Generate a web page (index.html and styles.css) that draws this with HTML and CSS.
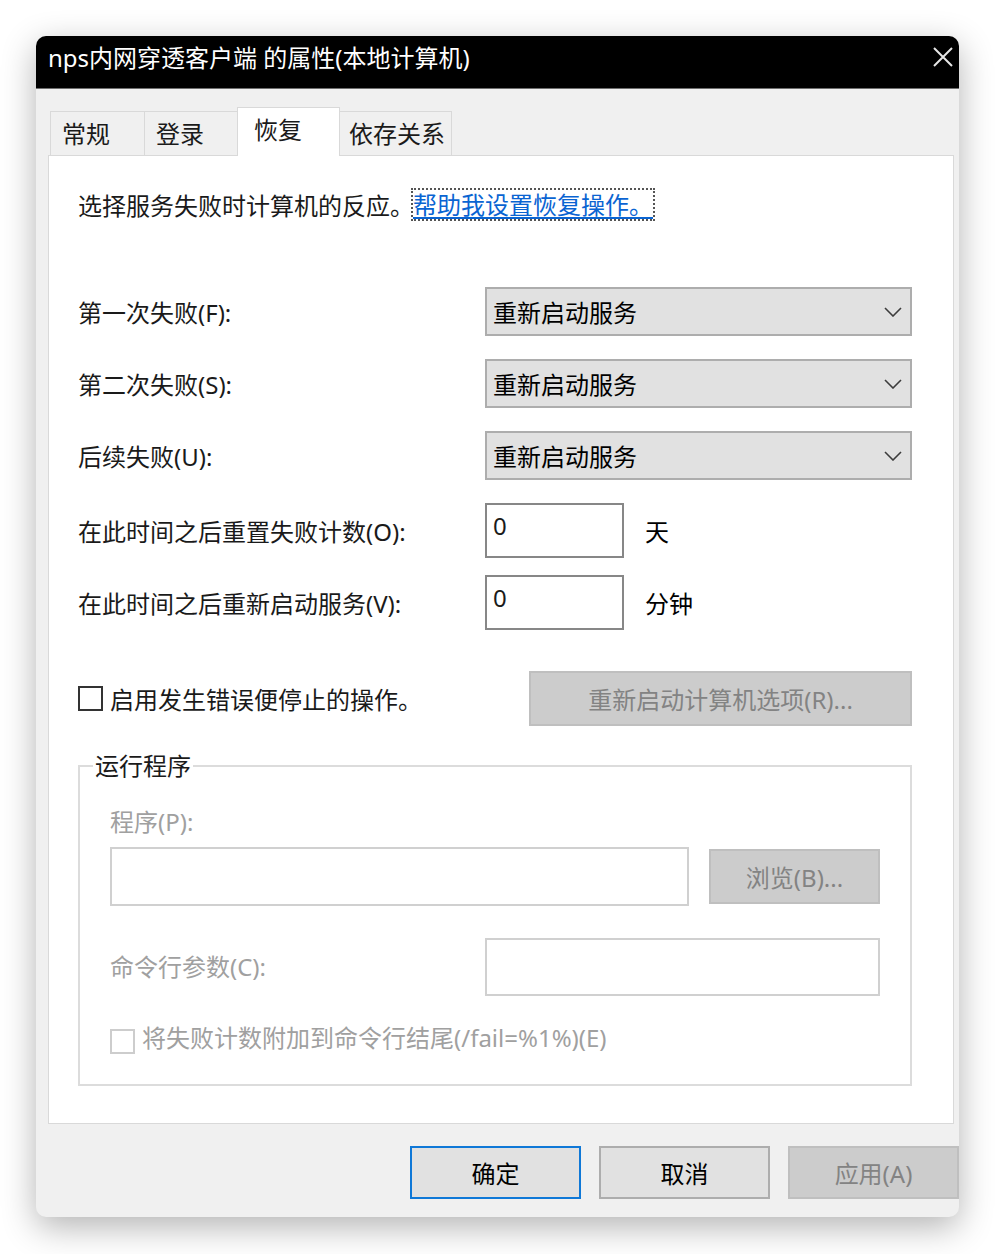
FILE: index.html
```html
<!DOCTYPE html>
<html lang="zh-CN">
<head>
    <meta charset="UTF-8">
    <title>nps内网穿透客户端 的属性(本地计算机)</title>
    <link rel="stylesheet" href="styles.css">
</head>
<body>
    <div class="window">
        <div class="titlebar">
            <span class="title">nps内网穿透客户端 的属性(本地计算机)</span>
            <svg class="close" width="22" height="22" viewBox="0 0 22 22"><path d="M2 2L20 20M20 2L2 20" stroke="#e6e6e6" stroke-width="2" fill="none"/></svg>
        </div>
        <div class="body">
            <div class="tabs">
                <div class="tab">常规</div>
                <div class="tab">登录</div>
                <div class="tab active">恢复</div>
                <div class="tab wide">依存关系</div>
            </div>
            <div class="panel">
                <div class="intro">选择服务失败时计算机的反应。<a class="link">帮助我设置恢复操作。</a></div>

                <div class="row">
                    <span class="label">第一次失败(F):</span>
                    <div class="select">重新启动服务<svg width="18" height="10" viewBox="0 0 18 10"><path d="M1 1L9 9L17 1" stroke="#3c3c3c" stroke-width="1.6" fill="none"/></svg></div>
                </div>
                <div class="row">
                    <span class="label">第二次失败(S):</span>
                    <div class="select">重新启动服务<svg width="18" height="10" viewBox="0 0 18 10"><path d="M1 1L9 9L17 1" stroke="#3c3c3c" stroke-width="1.6" fill="none"/></svg></div>
                </div>
                <div class="row">
                    <span class="label">后续失败(U):</span>
                    <div class="select">重新启动服务<svg width="18" height="10" viewBox="0 0 18 10"><path d="M1 1L9 9L17 1" stroke="#3c3c3c" stroke-width="1.6" fill="none"/></svg></div>
                </div>
                <div class="row num">
                    <span class="label">在此时间之后重置失败计数(O):</span>
                    <div class="input">0</div>
                    <span class="unit">天</span>
                </div>
                <div class="row num">
                    <span class="label">在此时间之后重新启动服务(V):</span>
                    <div class="input">0</div>
                    <span class="unit">分钟</span>
                </div>

                <div class="check-row">
                    <span class="check"><span class="box"></span>启用发生错误便停止的操作。</span>
                    <button class="btn off restart">重新启动计算机选项(R)...</button>
                </div>

                <fieldset class="group">
                    <legend>运行程序</legend>
                    <div class="muted">程序(P):</div>
                    <div class="prog-row">
                        <div class="field"></div>
                        <button class="btn off browse">浏览(B)...</button>
                    </div>
                    <div class="cmd-row">
                        <span class="muted cmd-label">命令行参数(C):</span>
                        <div class="field"></div>
                    </div>
                    <div class="check muted small"><span class="box dim"></span>将失败计数附加到命令行结尾(/fail=%1%)(E)</div>
                </fieldset>
            </div>
            <div class="footer">
                <button class="btn primary">确定</button>
                <button class="btn">取消</button>
                <button class="btn off">应用(A)</button>
            </div>
        </div>
    </div>
</body>
</html>
```

FILE: styles.css
```css
*{margin:0;padding:0;box-sizing:border-box}
body{background:#fff;font-family:"Noto Sans","Noto Sans CJK SC",sans-serif;font-size:24px;color:#000}
.window{width:923px;margin:36px 0 40px 36px;border-radius:10px;overflow:hidden;background:#f0f0f0;box-shadow:0 10px 34px rgba(0,0,0,0.3)}
.titlebar{height:53px;background:#000;border-bottom:1px solid #6e6e6e;display:flex;align-items:flex-start;justify-content:space-between;padding:0 5px 0 12px;color:#fff}
.title{line-height:44px;white-space:nowrap}
.close{margin-top:10px}
.body{padding-top:18px}
.tabs{display:flex;align-items:flex-end;margin-left:14px;height:48px}
.tab{width:95px;height:44px;padding:0 0 2px 11px;display:flex;align-items:center;background:#f0f0f0;border:1px solid #d9d9d9;border-bottom:none;margin-right:-1px;color:#1a1a1a}
.tab.active{width:103px;height:49px;padding:0 0 8px 16px;background:#fff;margin:0 -1px -1px -1px;position:relative;z-index:1}
.tab.wide{width:113px;padding-left:9px}
.panel{margin:0 5px 0 12px;background:#fff;border:1px solid #d9d9d9;padding:32px 41px 37px 29px}
.intro{display:flex;align-items:center;height:33px;color:#1a1a1a}
.link{display:inline-block;color:#0a64d2;text-decoration:underline;text-underline-offset:3px;border:2px dotted #555;line-height:29px;padding:0;margin-left:-3px}
.row{display:flex;align-items:center;height:49px;margin-top:23px}
.intro+.row{margin-top:66px}
.row.num{height:55px}
.row.num+.row.num{margin-top:17px}
.label{width:407px;flex:none;color:#1a1a1a}
.select{flex:1;height:49px;display:flex;align-items:center;justify-content:space-between;padding:0 8px 0 6px;background:#e1e1e1;border:2px solid #adadad}
.input{width:139px;height:55px;border:2px solid #878787;padding:4px 0 0 6px;line-height:34px;color:#1a1a1a}
.unit{margin-left:21px}
.check-row{display:flex;align-items:center;justify-content:space-between;height:55px;margin-top:41px}
.check{display:flex;align-items:center;gap:7px;color:#1a1a1a}
.box{width:25px;height:25px;border:2px solid #333;background:#fff}
.btn{font:inherit;color:#000;background:#e1e1e1;border:2px solid #adadad;height:53px;width:171px}
.btn.off{background:#ccc;border-color:#bfbfbf;color:#838383}
.btn.primary{border-color:#0f78d7}
.restart{width:383px;height:55px}
.group{margin-top:25px;border:2px solid #dcdcdc;padding:26px 30px 34px 30px}
.group legend{margin-left:-17px;padding:0 2px;line-height:30px;color:#1a1a1a}
.muted{color:#a0a0a0;line-height:30px}
.prog-row{display:flex;align-items:center;gap:20px;margin-top:10px}
.prog-row .field{flex:1;height:59px}
.field{border:2px solid #d0d0d0;background:#fff}
.browse{height:55px}
.cmd-row{display:flex;align-items:center;margin-top:32px}
.cmd-label{width:375px;flex:none}
.cmd-row .field{flex:1;height:58px}
.check.small{margin-top:30px;height:24px}
.box.dim{width:25px;height:25px;border-color:#cdcdcd;margin-top:6px}
.footer{display:flex;justify-content:flex-end;gap:18px;padding:22px 0 18px}
```
